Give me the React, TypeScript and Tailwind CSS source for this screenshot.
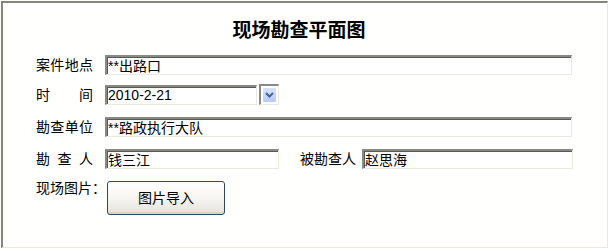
import React from "react";

const font = { fontFamily: '"Liberation Sans", "Noto Sans CJK SC", sans-serif' };

function Label({ chars }: { chars: string[] }) {
  return (
    <div className="flex w-[57px] justify-between text-[14px] leading-[20px] text-black">
      {chars.map((c, i) => (
        <span key={i}>{c}</span>
      ))}
    </div>
  );
}

function Field({ w, value }: { w: string; value: string }) {
  return (
    <div
      className={`${w} flex h-[20px] items-center overflow-hidden whitespace-nowrap border-t-2 border-l-2 border-t-[#8a8a84] border-l-[#8a8a84] border-r border-b border-r-[#ece9e0] border-b-[#ece9e0] bg-white pl-px text-[14px] leading-[16px] text-black shadow-[inset_1px_1px_0_#5a5a55]`}
    >
      {value}
    </div>
  );
}

export default function App() {
  return (
    <div className="h-[250px] w-[610px] bg-white" style={font}>
      <div className="ml-px mt-px flex h-[247px] w-[607px] flex-col border-t-2 border-l-2 border-t-[#86867c] border-l-[#86867c] border-r border-b border-r-[#ece9d8] border-b-[#ece9d8] bg-[#fffffd]">
        <div className="mt-[18px] pr-[12px] text-center text-[19px] font-bold leading-[19px] text-black">
          现场勘查平面图
        </div>

        <div className="mt-[15px] flex items-center pl-[33px]">
          <Label chars={["案", "件", "地", "点"]} />
          <div className="ml-[12px]">
            <Field w="w-[467px]" value="**出路口" />
          </div>
        </div>

        <div className="mt-[9px] flex items-center pl-[33px]">
          <Label chars={["时", "间"]} />
          <div className="ml-[12px] flex items-center gap-[2px]">
            <Field w="w-[152px]" value="2010-2-21" />
            <div className="flex h-[21px] w-[20px] border-t-2 border-l-2 border-t-[#8a8a84] border-l-[#8a8a84] border-r border-b border-r-[#ece9e0] border-b-[#ece9e0] bg-white p-px">
              <div className="flex flex-1 items-center justify-center rounded-[2px] border border-white bg-gradient-to-b from-[#d8e3fd] to-[#b6cafa]">
                <svg width="9" height="6" viewBox="0 0 9 6">
                  <polyline
                    points="1,1 4.5,4.5 8,1"
                    fill="none"
                    stroke="#4d6185"
                    strokeWidth="2"
                  />
                </svg>
              </div>
            </div>
          </div>
        </div>

        <div className="mt-[12px] flex items-center pl-[33px]">
          <Label chars={["勘", "查", "单", "位"]} />
          <div className="ml-[12px]">
            <Field w="w-[467px]" value="**路政执行大队" />
          </div>
        </div>

        <div className="mt-[12px] flex items-center pl-[33px]">
          <Label chars={["勘", "查", "人"]} />
          <div className="ml-[12px]">
            <Field w="w-[174px]" value="钱三江" />
          </div>
          <div className="ml-[21px] whitespace-nowrap text-[14px] leading-[20px] text-black">
            被勘查人
          </div>
          <div className="ml-[6px]">
            <Field w="w-[211px]" value="赵思海" />
          </div>
        </div>

        <div className="mt-[12px] flex items-start pl-[33px]">
          <div className="w-[71px] whitespace-nowrap text-[14px] leading-[14px] text-black">
            现场图片：
          </div>
          <button className="flex h-[34px] w-[118px] items-center justify-center rounded-[3px] border border-[#2c4a68] bg-gradient-to-b from-white via-[#f6f5f1] to-[#e3e2da] text-[14px] text-black shadow-[inset_0_-2px_0_#d6d4cb]">
            图片导入
          </button>
        </div>
      </div>
    </div>
  );
}
